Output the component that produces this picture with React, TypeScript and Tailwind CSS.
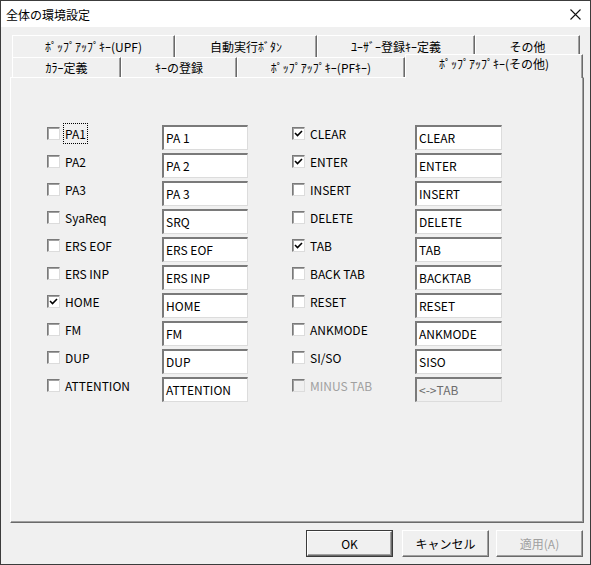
import React from "react";

type Row = { label: string; value: string; checked?: boolean; focus?: boolean; disabled?: boolean };

const leftRows: Row[] = [
    { label: "PA1", value: "PA 1", focus: true },
    { label: "PA2", value: "PA 2" },
    { label: "PA3", value: "PA 3" },
    { label: "SyaReq", value: "SRQ" },
    { label: "ERS EOF", value: "ERS EOF" },
    { label: "ERS INP", value: "ERS INP" },
    { label: "HOME", value: "HOME", checked: true },
    { label: "FM", value: "FM" },
    { label: "DUP", value: "DUP" },
    { label: "ATTENTION", value: "ATTENTION" },
];

const rightRows: Row[] = [
    { label: "CLEAR", value: "CLEAR", checked: true },
    { label: "ENTER", value: "ENTER", checked: true },
    { label: "INSERT", value: "INSERT" },
    { label: "DELETE", value: "DELETE" },
    { label: "TAB", value: "TAB", checked: true },
    { label: "BACK TAB", value: "BACKTAB" },
    { label: "RESET", value: "RESET" },
    { label: "ANKMODE", value: "ANKMODE" },
    { label: "SI/SO", value: "SISO" },
    { label: "MINUS TAB", value: "<->TAB", disabled: true },
];

const topTabs = [
    { text: "ﾎﾟｯﾌﾟｱｯﾌﾟｷｰ(UPF)", w: "w-[163px]" },
    { text: "自動実行ﾎﾞﾀﾝ", w: "w-[142px]" },
    { text: "ﾕｰｻﾞｰ登録ｷｰ定義", w: "w-[158px]" },
    { text: "その他", w: "w-[105px]" },
];

const bottomTabs = [
    { text: "ｶﾗｰ定義", w: "w-[109px]" },
    { text: "ｷｰの登録", w: "w-[116px]" },
    { text: "ﾎﾟｯﾌﾟｱｯﾌﾟｷｰ(PFｷｰ)", w: "w-[168px]" },
];

const Check: React.FC<{ checked?: boolean; disabled?: boolean }> = ({ checked, disabled }) => (
    <div className={`w-[13px] h-[13px] flex items-center justify-center border border-t-[#7a7a7a] border-l-[#7a7a7a] border-b-[#dcdcdc] border-r-[#dcdcdc] shadow-[inset_1px_1px_0_#a0a0a0] ${disabled ? "bg-[#f0f0f0]" : "bg-white"}`}>
        {checked && (
            <svg width="9" height="9" viewBox="0 0 9 9">
                <path d="M1 4 L3.5 6.5 L8 2" fill="none" stroke="#000" strokeWidth="1.6" />
            </svg>
        )}
    </div>
);

const Field: React.FC<{ row: Row; labelW: string; inputW: string }> = ({ row, labelW, inputW }) => (
    <div className="flex h-[28px]">
        <div className="flex items-center h-[21px]">
            <Check checked={row.checked} disabled={row.disabled} />
            <div className={`ml-[5px] ${labelW}`}>
                <span className={`${row.disabled ? "text-[#a0a0a0]" : "text-black"} ${row.focus ? "outline-1 outline-dotted outline-black outline-offset-[1px]" : ""}`}>
                    {row.label}
                </span>
            </div>
        </div>
        <div className={`mt-[2px] h-[25px] ${inputW} flex items-center pl-[2px] pb-[1px] border-t-2 border-l-2 border-t-[#7a7a7a] border-l-[#7a7a7a] border-b border-r border-b-[#dcdcdc] border-r-[#dcdcdc] ${row.disabled ? "bg-[#f0f0f0] text-[#6d6d6d]" : "bg-white text-black"}`}>
            {row.value}
        </div>
    </div>
);

const Tab: React.FC<{ text: string; w: string }> = ({ text, w }) => (
    <div className={`${w} h-full flex items-center justify-center border-t border-l border-t-white border-l-white border-r border-r-[#6a6a6a] shadow-[inset_-1px_0_0_#a0a0a0]`}>
        {text}
    </div>
);

const Button: React.FC<{ children: React.ReactNode; primary?: boolean; disabled?: boolean; className?: string }> = ({ children, primary, disabled, className }) => (
    <div className={`w-[87px] h-[27px] flex items-center justify-center ${className ?? ""} ${primary ? "border border-[#3a3a3a]" : ""}`}>
        <div className={`w-full h-full flex items-center justify-center bg-[#f0f0f0] border border-t-white border-l-white border-r-[#6a6a6a] border-b-[#6a6a6a] shadow-[inset_-1px_-1px_0_#a0a0a0] ${disabled ? "text-[#a0a0a0]" : "text-black"}`}>
            {children}
        </div>
    </div>
);

const App: React.FC = () => {
    return (
        <div className="w-[591px] h-[565px] overflow-hidden border border-[#3c3c3c] bg-[#f0f0f0] text-[12px] leading-none text-black flex flex-col" style={{ fontFamily: '"Noto Sans CJK JP", "Noto Sans", sans-serif' }}>
            {/* title bar */}
            <div className="h-[26px] bg-white flex items-center justify-between pl-[5px] pr-[9px]">
                <div className="text-[12px] mt-[1px]">全体の環境設定</div>
                <svg width="11" height="11" viewBox="0 0 11 11">
                    <path d="M0.5 0.5 L10.5 10.5 M10.5 0.5 L0.5 10.5" stroke="#111" strokeWidth="1.1" />
                </svg>
            </div>

            {/* tabs */}
            <div className="mt-[8px] ml-[11px] flex h-[22px]">
                {topTabs.map((t) => <Tab key={t.text} text={t.text} w={t.w} />)}
            </div>
            <div className="ml-[11px] flex items-end h-[20px]">
                {bottomTabs.map((t) => <Tab key={t.text} text={t.text} w={t.w} />)}
                <div className="relative z-10 w-[178px] h-[24px] -mb-px pb-[6px] flex items-center justify-center bg-[#f0f0f0] border-t border-l border-t-white border-l-white border-r border-r-[#6a6a6a] shadow-[inset_-1px_0_0_#a0a0a0]">
                    ﾎﾟｯﾌﾟｱｯﾌﾟｷｰ(その他)
                </div>
            </div>

            {/* panel */}
            <div className="ml-[9px] w-[574px] h-[446px] border border-t-white border-l-white border-r-[#6a6a6a] border-b-[#6a6a6a] shadow-[inset_-1px_-1px_0_#a0a0a0] pt-[45px] pl-[36px] flex">
                <div className="flex flex-col">
                    {leftRows.map((r) => <Field key={r.label} row={r} labelW="w-[97px]" inputW="w-[86px]" />)}
                </div>
                <div className="flex flex-col ml-[44px]">
                    {rightRows.map((r) => <Field key={r.label} row={r} labelW="w-[105px]" inputW="w-[87px]" />)}
                </div>
            </div>

            {/* buttons */}
            <div className="flex mt-[7px] ml-[305px]">
                <Button primary>OK</Button>
                <Button className="ml-[9px]">キャンセル</Button>
                <Button className="ml-[7px]" disabled>適用(A)</Button>
            </div>
        </div>
    );
};

export default App;
